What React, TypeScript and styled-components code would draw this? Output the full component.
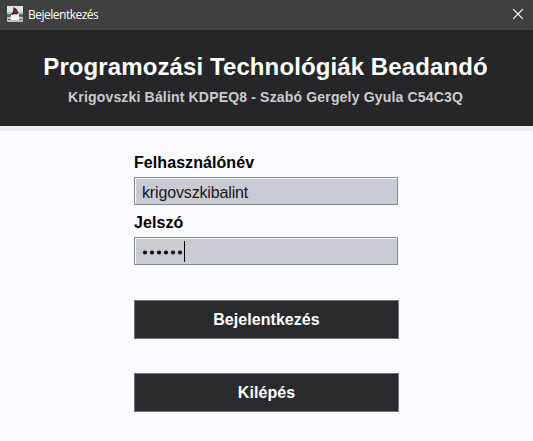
import React, { useState } from 'react';
import styled, { createGlobalStyle } from 'styled-components';

const GlobalStyle = createGlobalStyle`
  * { box-sizing: border-box; }
  body { margin: 0; background: #fafaff; overflow: hidden; }
`;

const Window = styled.div`
  display: flex;
  flex-direction: column;
  width: 533px;
  height: 441px;
  background: #fafaff;
  font-family: 'Liberation Sans', Arial, sans-serif;
`;

const TitleBar = styled.div`
  display: flex;
  align-items: center;
  flex: 0 0 30px;
  padding: 0 9px 2px 7px;
  background: #404040;
  color: #fff;
`;

const WindowTitle = styled.span`
  flex: 1;
  margin: 2px 0 0 5px;
  font: 12px/16px 'Open Sans', 'Noto Sans', sans-serif;
  letter-spacing: -0.5px;
`;

const CloseButton = styled.button`
  display: flex;
  padding: 0;
  border: 0;
  background: none;
  color: #fff;
`;

const Header = styled.header`
  display: flex;
  flex-direction: column;
  align-items: center;
  flex: 0 0 101px;
  padding: 22px 2px 0 0;
  background: #262628;
  border-bottom: 5px solid #eeeeee;
  white-space: nowrap;
`;

const Heading = styled.h1`
  margin: 0;
  font-size: 24px;
  line-height: 30px;
  font-weight: bold;
  letter-spacing: 0.1px;
  color: #fff;
`;

const Authors = styled.p`
  margin: 6px 0 0;
  font-size: 14px;
  line-height: 18px;
  font-weight: bold;
  letter-spacing: 0.17px;
  color: #cbcbd2;
`;

const Form = styled.form`
  display: flex;
  flex-direction: column;
  width: 265px;
  margin: 21px 0 0 134px;
`;

const Field = styled.label`
  display: flex;
  flex-direction: column;
  height: 60px;
`;

const Label = styled.span`
  height: 25px;
  font-size: 16px;
  line-height: 21px;
  font-weight: bold;
  letter-spacing: 0.07px;
  color: #000;
`;

const InputFrame = styled.span`
  display: flex;
  align-items: center;
  width: 264px;
  height: 28px;
  padding-left: 7px;
  border: 1px solid #7a8a99;
  background: #cacad2;
  box-shadow: inset 1px 1px 0 #fafaff;
`;

const Value = styled.span`
  padding-top: 3px;
  font-size: 16px;
  line-height: 18px;
  letter-spacing: -0.15px;
  color: #18181a;
`;

const Dots = styled.svg`
  display: block;
  margin-top: 3px;
`;

const Caret = styled.i`
  width: 1px;
  height: 21px;
  background: #000;
`;

const Button = styled.button<{ $gap: number }>`
  height: 39px;
  margin: ${(p) => p.$gap}px 0 0;
  padding: 0;
  border: 1px solid #6d7680;
  background: #2a2a2c;
  color: #fff;
  font: bold 16px/18px 'Liberation Sans', Arial, sans-serif;
  letter-spacing: 0.05px;
`;

const JavaIcon = () => (
  <svg width="16" height="16" viewBox="0 0 16 16">
    <rect width="16" height="16" rx="1" fill="#b9bec2" />
    <path d="M0 0h16v6H0z" fill="#e0e4e6" />
    <path d="M0 8h4v3H0zM12 8h4v3h-4z" fill="#59656d" />
    <path d="M3 13l2-6 3 2 3-2 2 6-1 1H4z" fill="#f2f4f4" />
    <path d="M6.5 1l3 2 2 4-2 1.5L8 8 5 9l-1-1 2-2z" fill="#302329" />
    <circle cx="8.6" cy="5.2" r="1.8" fill="#8d1b2d" />
    <path d="M1 13h3v1H1zM12 13h3v1h-3z" fill="#59636a" />
  </svg>
);

export default function App() {
  const [username] = useState('krigovszkibalint');
  const [passwordLength] = useState(6);
  return (
    <>
      <GlobalStyle />
      <Window>
        <TitleBar>
          <JavaIcon />
          <WindowTitle>Bejelentkezés</WindowTitle>
          <CloseButton type="button" aria-label="Bezárás">
            <svg width="12" height="12" viewBox="0 0 12 12">
              <path d="M1.2 1.2l9.6 9.6M10.8 1.2L1.2 10.8" stroke="currentColor" strokeWidth="1.2" />
            </svg>
          </CloseButton>
        </TitleBar>
        <Header>
          <Heading>Programozási Technológiák Beadandó</Heading>
          <Authors>Krigovszki Bálint KDPEQ8 - Szabó Gergely Gyula C54C3Q</Authors>
        </Header>
        <Form>
          <Field>
            <Label>Felhasználónév</Label>
            <InputFrame>
              <Value>{username}</Value>
            </InputFrame>
          </Field>
          <Field>
            <Label>Jelszó</Label>
            <InputFrame>
              <Dots width={passwordLength * 7} height="5">
                {Array.from({ length: passwordLength }, (_, i) => (
                  <circle key={i} cx={3 + i * 7} cy="2.5" r="2.1" fill="#0c0c0e" />
                ))}
              </Dots>
              <Caret />
            </InputFrame>
          </Field>
          <Button type="button" $gap={28}>Bejelentkezés</Button>
          <Button type="button" $gap={34}>Kilépés</Button>
        </Form>
      </Window>
    </>
  );
}
